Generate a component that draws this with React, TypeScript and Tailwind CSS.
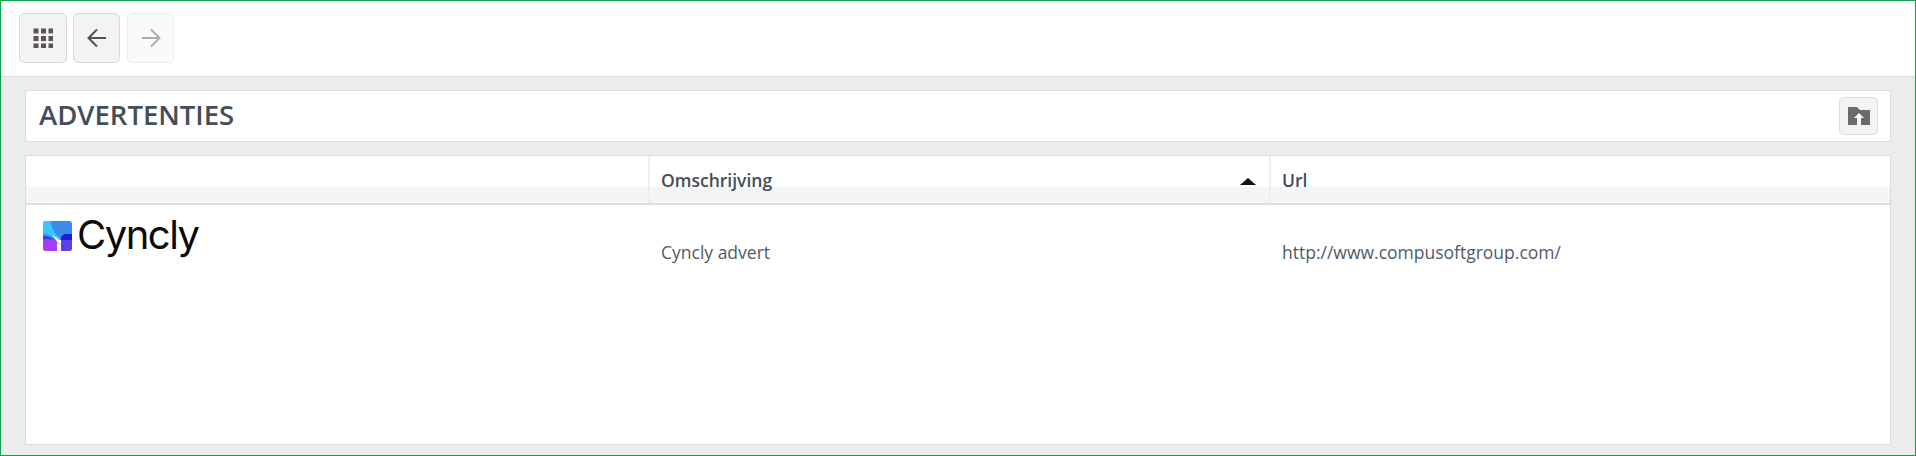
export default function App() {
  return (
    <div className="h-[456px] w-[1916px] border border-[#0aa14b] bg-[#ececec] flex flex-col font-['Open_Sans',sans-serif] text-[#48505c] overflow-hidden">
      <div className="h-[76px] shrink-0 bg-white border-b border-[#dcdcdc] flex items-start gap-[6px] pl-[18px] pt-[12px]">
        <button className="w-[48px] h-[50px] rounded-[5px] border border-[#d9d9d9] bg-[#f3f3f3] flex items-center justify-center">
          <svg width="20" height="20" viewBox="0 0 20 20" fill="#5b5452">
            {[0, 7.5, 15].flatMap((y) => [0, 7.5, 15].map((x) => <rect key={`${x}-${y}`} x={x + 0.5} y={y + 0.5} width="5" height="5" />))}
          </svg>
        </button>
        <button className="w-[47px] h-[50px] rounded-[5px] border border-[#d9d9d9] bg-[#f3f3f3] flex items-center justify-center">
          <svg width="20" height="20" viewBox="0 0 20 20" fill="none" stroke="#55514f" strokeWidth="2">
            <path d="M19 10H2M10 1.500 1.500 10l8.500 8.500" />
          </svg>
        </button>
        <button className="ml-[1px] w-[47px] h-[50px] rounded-[5px] border border-[#ececec] bg-[#fafafa] flex items-center justify-center">
          <svg width="20" height="20" viewBox="0 0 20 20" fill="none" stroke="#adadad" strokeWidth="2">
            <path d="M1 10h17M10 1.500 18.500 10 10 18.500" />
          </svg>
        </button>
      </div>
      <div className="flex-1 flex flex-col gap-[13px] pt-[13px] pl-[24px] pr-[24px] pb-[10px]">
        <div className="h-[52px] shrink-0 bg-white border border-[#dcdcdc] flex items-center justify-between pl-[13px] pr-[12px]">
          <h1 className="text-[27.500px] font-semibold leading-none text-[#444d58] -mt-[2px]">ADVERTENTIES</h1>
          <button className="w-[39px] h-[38px] rounded-[5px] border border-[#dedede] bg-[#f3f3f3] flex items-center justify-center">
            <svg width="22" height="18" viewBox="0 0 22 18">
              <path d="M0 0h9l3 3h10v15H0z" fill="#6b6b6b" />
              <path d="M11 6l5 5h-3v7H9v-7H6z" fill="#fff" />
            </svg>
          </button>
        </div>
        <div className="flex-1 bg-white border border-[#dcdcdc]">
          <div className="grid grid-cols-[622px_621px_1fr] h-[49px] border-b-2 border-[#dedede] bg-[linear-gradient(#ffffff_0,#ffffff_31px,#f4f5f7_31px,#f4f5f7_100%)] text-[17.500px] leading-[20px] font-semibold text-[#454d5a]">
            <div />
            <div className="border-l-2 border-[#eeeeee] pl-[11px] pr-[11px] pt-[14px] flex justify-between">
              <span>Omschrijving</span>
              <svg className="mt-[8px] mr-[2px]" width="16" height="7" viewBox="0 0 16 7"><path d="M8 0 16 7H0z" fill="#111" /></svg>
            </div>
            <div className="border-l-2 border-[#eeeeee] pl-[11px] pt-[14px] flex"><span>Url</span></div>
          </div>
          <div className="grid grid-cols-[622px_621px_1fr] text-[17.500px] leading-[20px] text-[#505a6b]">
            <div className="pl-[17px] pt-[15px] flex items-start gap-[5px]">
              <svg width="29" height="30" viewBox="0 0 29 30" className="mt-[1px]">
                <defs><clipPath id="c"><rect width="29" height="30" rx="3" /></clipPath></defs>
                <g clipPath="url(#c)">
                  <rect width="29" height="30" fill="#3b8bec" />
                  <path d="M0 0h8c0 6 3 12 8 16 1 2 2 3 2 5h-3c-3-5-9-8-15-8z" fill="#38c6fc" />
                  <path d="M0 15c6 0 11 3 14 7v8H0z" fill="#a63df6" />
                  <path d="M0 15c4 0 8 1 11 4-3-1-7-1-11-1z" fill="#2f3fe0" />
                  <path d="M18 16h11v14H18z" fill="#5f3fe8" />
                  <path d="M18 19c0-4 2-6 5-6h6v6h-11z" fill="#1320d8" />
                  <path d="M14 22c2 1 4 2 4 3v5h-4z" fill="#fff" />
                  <path d="M9 14c3 1 5 3 7 5l2 0v6c-1-2-2-3-4-4-1-2-3-5-5-7z" fill="#fff" />
                </g>
              </svg>
              <span className="font-['Inter',sans-serif] text-[40px] leading-[34px] tracking-[-1.500px] text-[#0a0a0a] -mt-[2px]">Cyncly</span>
            </div>
            <div className="pl-[13px] pt-[37px]">Cyncly advert</div>
            <div className="pl-[13px] pt-[37px]">http://www.compusoftgroup.com/</div>
          </div>
        </div>
      </div>
    </div>
  );
}
